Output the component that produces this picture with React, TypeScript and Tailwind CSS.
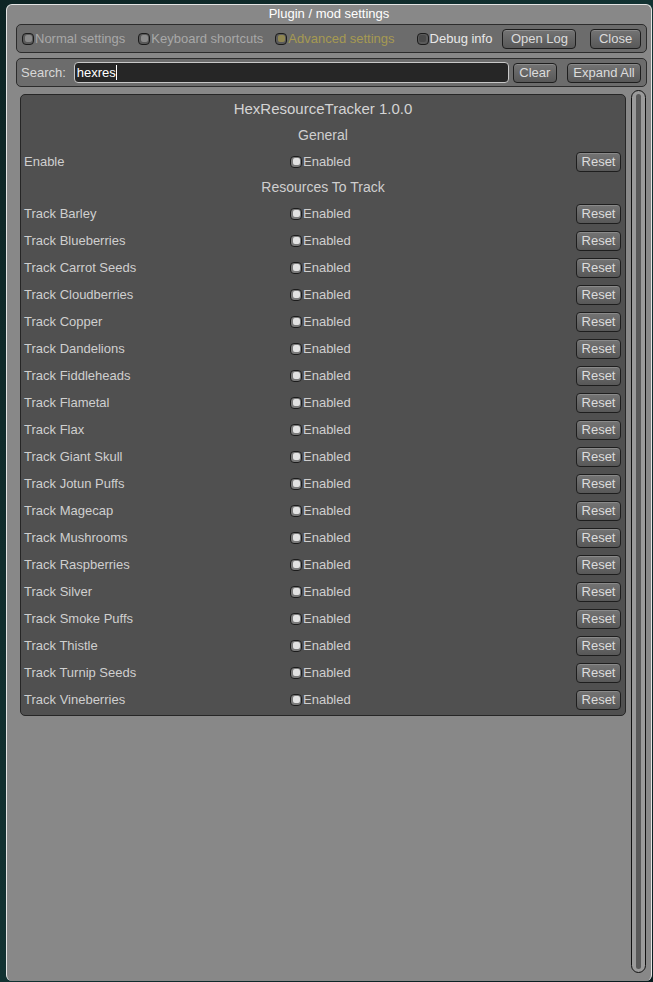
const resources = [
  "Barley",
  "Blueberries",
  "Carrot Seeds",
  "Cloudberries",
  "Copper",
  "Dandelions",
  "Fiddleheads",
  "Flametal",
  "Flax",
  "Giant Skull",
  "Jotun Puffs",
  "Magecap",
  "Mushrooms",
  "Raspberries",
  "Silver",
  "Smoke Puffs",
  "Thistle",
  "Turnip Seeds",
  "Vineberries",
];

const Check = ({ dot = "bg-[#e2e2e2]", rim = "bg-[#7a7a7a]" }: { dot?: string; rim?: string }) => (
  <span className={`w-[12px] h-[12px] rounded-[4px] ${rim} border border-[#1c1c1c] flex items-center justify-center shrink-0`}>
    <span className={`w-[7px] h-[7px] rounded-[2px] ${dot}`} />
  </span>
);

const Btn = ({ label, w }: { label: string; w: string }) => (
  <button
    className={`${w} h-[20px] rounded-[4px] border border-[#1e1e1e] bg-gradient-to-b from-[#747474] to-[#585858] text-[#dcdcdc] text-[13px] leading-none flex items-center justify-center shadow-[inset_0_1px_0_#8a8a8a]`}
  >
    {label}
  </button>
);

const Row = ({ label }: { label: string }) => (
  <div className="h-[27px] flex items-center">
    <div className="w-[269px] pl-[3px] text-[#cfcfcf]">{label}</div>
    <div className="flex items-center flex-1">
      <Check />
      <span className="ml-[1px] text-[#cfcfcf]">Enabled</span>
    </div>
    <div className="pr-[4px]">
      <Btn label="Reset" w="w-[45px]" />
    </div>
  </div>
);

export default function App() {
  return (
    <div
      className="w-[653px] h-[982px] overflow-hidden bg-gradient-to-br from-[#0d2424] via-[#123232] to-[#0a1c1f] pl-[6px] pt-[4px]"
      style={{ fontFamily: '"Liberation Sans", Arial, sans-serif' }}
    >
      <div className="w-[646px] h-[977px] bg-[#888888] rounded-[6px] border-l border-t border-r border-[#e4e4e4] text-[13px] flex flex-col">
        <div className="h-[18px] text-center text-white text-[13px] leading-[18px]">
          Plugin / mod settings
        </div>

        <div className="ml-[9px] mr-[4px] mt-[1px] h-[29px] rounded-[5px] border border-[#2c2c2c] bg-[#6c6c6c] flex items-center pl-[5px] pr-[5px]">
          <Check dot="bg-[#8a8a8a]" rim="bg-[#5a5a5a]" />
          <span className="ml-[1px] text-[#a8a8a8]">Normal settings</span>
          <span className="ml-[13px]"><Check dot="bg-[#8a8a8a]" rim="bg-[#5a5a5a]" /></span>
          <span className="ml-[1px] text-[#a8a8a8]">Keyboard shortcuts</span>
          <span className="ml-[12px]"><Check dot="bg-[#8f8652]" rim="bg-[#5a5a5a]" /></span>
          <span className="ml-[1px] text-[#a69a52]">Advanced settings</span>
          <span className="ml-[22px]"><Check dot="bg-[#4a4a4a]" rim="bg-[#5a5a5a]" /></span>
          <span className="ml-[1px] text-[#e8e8e8]">Debug info</span>
          <span className="ml-[10px]"><Btn label="Open Log" w="w-[74px]" /></span>
          <span className="ml-auto"><Btn label="Close" w="w-[51px]" /></span>
        </div>

        <div className="ml-[9px] mr-[4px] mt-[5px] h-[29px] rounded-[5px] border border-[#2c2c2c] bg-[#6c6c6c] flex items-center pl-[4px] pr-[5px]">
          <span className="text-[#d8d8d8]">Search:</span>
          <div className="ml-[8px] w-[435px] h-[21px] rounded-[4px] border border-[#c8c8c8] bg-[#262626] flex items-center pl-[2px] text-white">
            hexres<span className="w-[1px] h-[15px] bg-white" />
          </div>
          <span className="ml-[4px]"><Btn label="Clear" w="w-[44px]" /></span>
          <span className="ml-auto"><Btn label="Expand All" w="w-[74px]" /></span>
        </div>

        <div className="flex flex-1 mt-[3px] pl-[13px] pb-[8px]">
          <div className="w-[606px] self-start mt-[4px]">
            <div className="w-[606px] rounded-[5px] border border-[#262626] bg-[#505050] pb-[2px]">
              <div className="h-[28px] flex items-center justify-center text-[15px] text-[#d4d4d4]">
                HexResourceTracker 1.0.0
              </div>
              <div className="h-[25px] flex items-center justify-center text-[14px] text-[#cfcfcf]">
                General
              </div>
              <div className="-mb-[1px]">
                <Row label="Enable" />
              </div>
              <div className="h-[26px] flex items-center justify-center text-[14px] text-[#cfcfcf]">
                Resources To Track
              </div>
              {resources.map((r) => (
                <Row key={r} label={`Track ${r}`} />
              ))}
            </div>
          </div>
          <div className="w-[15px] ml-[5px] rounded-full border border-[#111] bg-[#9a9a9a] flex justify-center pt-[3px] pb-[3px]">
            <div className="w-[5px] h-full bg-[#595959] rounded-full" />
          </div>
        </div>
      </div>
    </div>
  );
}
